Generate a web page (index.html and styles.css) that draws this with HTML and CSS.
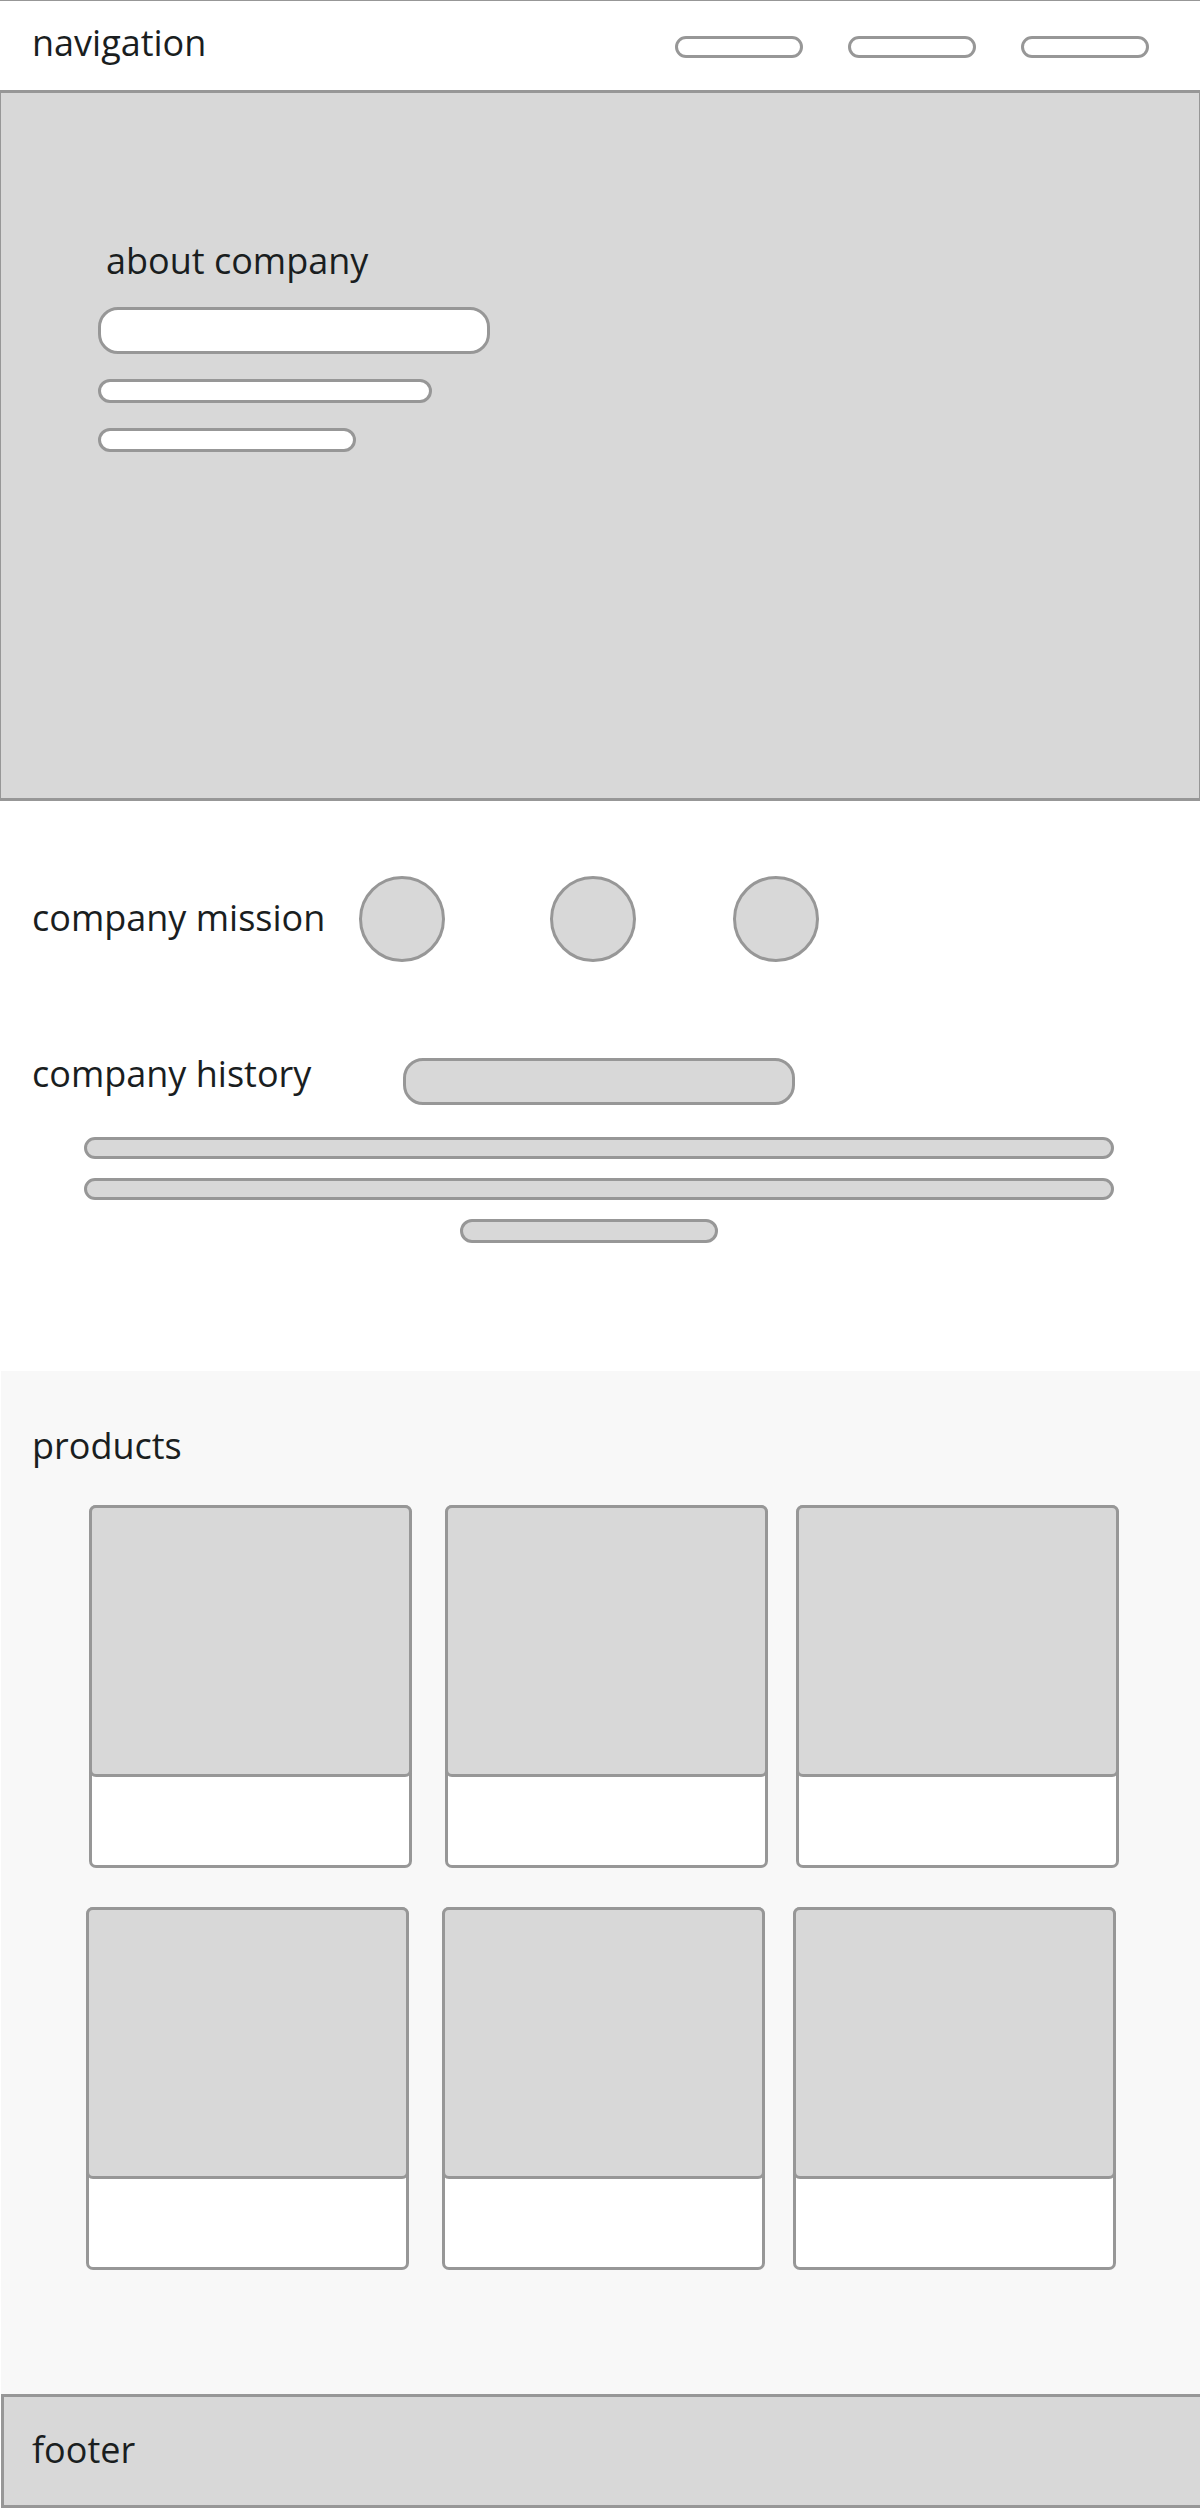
FILE: index.html
```html
<!DOCTYPE html>
<html lang="en">
<head>
  <meta charset="utf-8">
  <meta name="viewport" content="width=device-width, initial-scale=1">
  <title>Company</title>
  <link rel="stylesheet" href="styles.css">
</head>
<body>
  <header class="header">
    <p class="label">navigation</p>
    <nav class="nav">
      <a class="bar bar-nav" href="#about" aria-label="About"></a>
      <a class="bar bar-nav" href="#history" aria-label="History"></a>
      <a class="bar bar-nav" href="#products" aria-label="Products"></a>
    </nav>
  </header>

  <main>
    <section class="hero" id="about">
      <h1 class="label hero-label">about company</h1>
      <div class="hero-lines">
        <div class="bar bar-title"></div>
        <div class="bar bar-medium"></div>
        <div class="bar bar-short"></div>
      </div>
    </section>

    <section class="mission">
      <h2 class="label">company mission</h2>
      <div class="circles">
        <div class="circle"></div>
        <div class="circle"></div>
        <div class="circle"></div>
      </div>
    </section>

    <section class="history" id="history">
      <div class="history-head">
        <h2 class="label">company history</h2>
        <div class="bar bar-title bar-filled"></div>
      </div>
      <div class="history-lines">
        <div class="bar bar-full bar-filled"></div>
        <div class="bar bar-full bar-filled"></div>
        <div class="bar bar-short bar-last bar-filled"></div>
      </div>
    </section>

    <section class="products" id="products">
      <h2 class="label">products</h2>
      <div class="shelves">
        <div class="shelf shelf-top">
          <article class="card"><div class="card-image"></div><div class="card-body"></div></article>
          <article class="card"><div class="card-image"></div><div class="card-body"></div></article>
          <article class="card"><div class="card-image"></div><div class="card-body"></div></article>
        </div>
        <div class="shelf shelf-bottom">
          <article class="card"><div class="card-image"></div><div class="card-body"></div></article>
          <article class="card"><div class="card-image"></div><div class="card-body"></div></article>
          <article class="card"><div class="card-image"></div><div class="card-body"></div></article>
        </div>
      </div>
    </section>
  </main>

  <footer class="footer">
    <p class="label">footer</p>
  </footer>
</body>
</html>
```

FILE: styles.css
```css
:root {
  --line: #979797;
  --fill: #d8d8d8;
  --shade: #f8f8f8;
  --ink: #1a1e1f;
}

* {
  box-sizing: border-box;
}

body {
  margin: 0;
  background: #fff;
  color: var(--ink);
  font-family: "Open Sans", sans-serif;
}

.label {
  margin: 0;
  font-size: 36px;
  font-weight: 400;
  line-height: 48px;
  white-space: nowrap;
}

/* Placeholder bars */
.bar {
  display: block;
  height: 24px;
  border: 3px solid var(--line);
  border-radius: 12px;
  background: #fff;
}

.bar-filled {
  background: var(--fill);
}

.bar-nav {
  width: 128px;
  height: 22px;
}

.bar-title {
  width: 392px;
  height: 47px;
  border-radius: 20px;
}

.bar-medium {
  width: 334px;
}

.bar-short {
  width: 258px;
}

.bar-full {
  height: 22px;
}

/* Header */
.header {
  display: flex;
  justify-content: space-between;
  padding: 18px 51px 23px 32px;
  border-top: 1px solid var(--line);
}

.nav {
  display: flex;
  gap: 45px;
  padding-top: 17px;
}

/* About */
.hero {
  padding: 144px 97px 346px;
  border: solid var(--line);
  border-width: 3px 1px;
  background: var(--fill);
}

.hero-label {
  padding-left: 8px;
}

.hero-lines {
  display: flex;
  flex-direction: column;
  gap: 25px;
  padding-top: 22px;
}

/* Mission */
.mission {
  display: grid;
  grid-template-columns: 327px 1fr;
  align-items: center;
  padding: 75px 32px 0;
}

.mission .label {
  padding-bottom: 2px;
}

.circles {
  display: grid;
  grid-template-columns: 191px 183px 86px;
}

.circle {
  width: 86px;
  height: 86px;
  border: 3px solid var(--line);
  border-radius: 50%;
  background: var(--fill);
}

/* History */
.history {
  padding: 88px 32px 128px;
}

.history-head {
  display: grid;
  grid-template-columns: 371px 1fr;
}

.history-head .bar {
  margin-top: 8px;
}

.history-lines {
  display: flex;
  flex-direction: column;
  gap: 19px;
  padding: 32px 54px 0 52px;
}

.bar-last {
  align-self: center;
  margin-right: 20px;
}

/* Products */
.products {
  margin-left: 1px;
  padding: 51px 0 124px;
  background: var(--shade);
}

.products .label {
  padding-left: 31px;
}

.shelves {
  display: grid;
  gap: 39px;
  padding-top: 35px;
}

.shelf {
  display: flex;
  gap: 28px;
}

.shelf-top {
  padding: 0 81px 0 88px;
}

.shelf-bottom {
  padding: 0 84px 0 85px;
}

.card {
  flex: 1;
  border: 3px solid var(--line);
  border-radius: 7px;
  background: #fff;
}

.card:first-child {
  margin-right: 5px;
}

.card-image {
  height: 272px;
  margin: -3px -3px 0;
  border: 3px solid var(--line);
  border-radius: 7px;
  background: var(--fill);
}

.card-body {
  height: 88px;
}

/* Footer */
.footer {
  margin: 0 0 3px 1px;
  padding: 29px 28px 31px;
  border: solid var(--line);
  border-width: 3px 0 3px 3px;
  background: var(--fill);
}
```
